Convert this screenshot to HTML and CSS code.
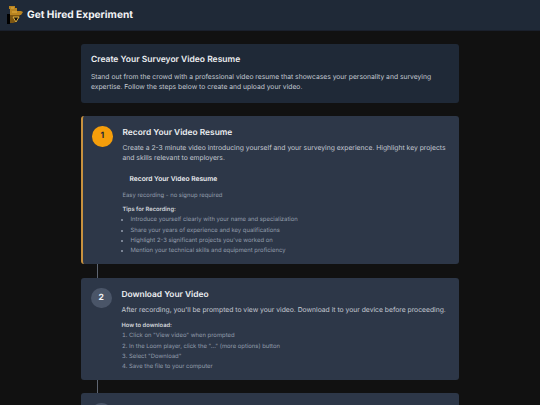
FILE: index.html
```html
<!DOCTYPE html>
<html lang="en">
<head>
<meta charset="utf-8">
<title>Get Hired Experiment</title>
<link rel="stylesheet" href="styles.css">
</head>
<body>
<header class="topbar">
  <svg class="logo" viewBox="0 0 16 18" width="16" height="18" aria-hidden="true">
    <rect x="0" y="8" width="3" height="10" fill="#000"/>
    <path d="M2 0h6v2h2v3h4l2 1-2 3H3V3H2z" fill="#b98420"/>
    <path d="M3 9h10l-1 3-2 1-1 3-3 1H3z" fill="#7d5612"/>
    <path d="M6 11h6l-3 5z" fill="#1a1408" stroke="#e0b040" stroke-width="1"/>
    <path d="M4 2h3M5 6h5" stroke="#e0ad42" stroke-width="1"/>
  </svg>
  <h1 class="brand">Get Hired Experiment</h1>
</header>
<main class="page">
  <section class="intro">
    <h2>Create Your Surveyor Video Resume</h2>
    <p>Stand out from the crowd with a professional video resume that showcases your personality and surveying expertise. Follow the steps below to create and upload your video.</p>
  </section>
  <div class="steps">
    <article class="step active">
      <div class="num">1</div>
      <div class="body">
        <h3>Record Your Video Resume</h3>
        <p class="desc">Create a 2-3 minute video introducing yourself and your surveying experience. Highlight key projects and skills relevant to employers.</p>
        <div class="record">Record Your Video Resume</div>
        <p class="note">Easy recording - no signup required</p>
        <h4>Tips for Recording:</h4>
        <ul>
          <li>Introduce yourself clearly with your name and specialization</li>
          <li>Share your years of experience and key qualifications</li>
          <li>Highlight 2-3 significant projects you've worked on</li>
          <li>Mention your technical skills and equipment proficiency</li>
        </ul>
      </div>
    </article>
    <div class="link"></div>
    <article class="step second">
      <div class="num">2</div>
      <div class="body">
        <h3>Download Your Video</h3>
        <p class="desc">After recording, you'll be prompted to view your video. Download it to your device before proceeding.</p>
        <h4>How to download:</h4>
        <ol>
          <li>Click on "View video" when prompted</li>
          <li>In the Loom player, click the "..." (more options) button</li>
          <li>Select "Download"</li>
          <li>Save the file to your computer</li>
        </ol>
      </div>
    </article>
    <div class="link"></div>
    <article class="step">
      <div class="num"></div>
    </article>
  </div>
</main>
</body>
</html>
```
FILE: styles.css
```css
* { box-sizing: border-box; }
html, body { height: 405px; overflow: hidden; }
body {
  margin: 0;
  background: #111111;
  color: #f3f4f6;
  font-family: Inter, "Liberation Sans", sans-serif;
  text-rendering: geometricPrecision;
}
h1, h2, h3, h4, p, ul, ol { margin: 0; padding: 0; }

.topbar {
  height: 30.5px;
  display: flex;
  align-items: center;
  gap: 4px;
  padding-left: 7px;
  background: #1f2937;
  border-bottom: 1px solid #1a202c;
}
.logo { flex: none; }
.brand { font-size: 10.2px; font-weight: 700; color: #f3f4f6; }

.page { width: 378px; margin: 13.5px 0 0 81px; }

.intro {
  height: 59px;
  padding: 10px;
  background: #1f2937;
  border-radius: 3px;
}
.intro h2 { font-size: 8.5px; font-weight: 600; line-height: 12px; margin-bottom: 6px; color: #eceef1; }
.intro p { font-size: 6.76px; line-height: 10.4px; color: #c4c9d2; }

.steps { margin-top: 13px; }
.step {
  display: flex;
  gap: 10px;
  padding: 10px;
  background: #2d3748;
  border-radius: 3px;
}
.step.active { border-left: 2px solid #c8923f; padding-left: 9px; height: 148px; }
.step.second { height: 102px; }
.num {
  flex: none;
  width: 20.5px;
  height: 20.5px;
  border-radius: 50%;
  background: #4a5568;
  color: #f3f4f6;
  font-size: 8.5px;
  font-weight: 700;
  display: flex;
  align-items: center;
  justify-content: center;
}
.step.active .num { background: #f59e0b; color: #1f2937; }
.body { flex: 1; min-width: 0; padding-top: 1px; }
.step h3 { font-size: 8.4px; font-weight: 600; line-height: 12px; margin-bottom: 4px; color: #eceef1; }
.desc { font-size: 6.77px; line-height: 10.4px; color: #c4c9d2; }
.record { font-size: 6.7px; font-weight: 600; line-height: 10px; margin: 10.6px 0 0 7px; color: #eceef1; }
.note { font-size: 5.9px; line-height: 9px; margin-top: 7px; color: #939dac; }
h4 { font-size: 5.8px; font-weight: 600; line-height: 9px; margin-top: 5px; color: #d1d5db; }
ul, ol { margin-top: 1px; font-size: 5.9px; line-height: 10.1px; color: #939dac; }
ul { padding-left: 8px; }
ol { padding-left: 7.5px; }
.second h4 { margin-top: 6.5px; }
.link { width: 1px; height: 13.5px; margin-left: 15.5px; background: #5f6672; }
```
